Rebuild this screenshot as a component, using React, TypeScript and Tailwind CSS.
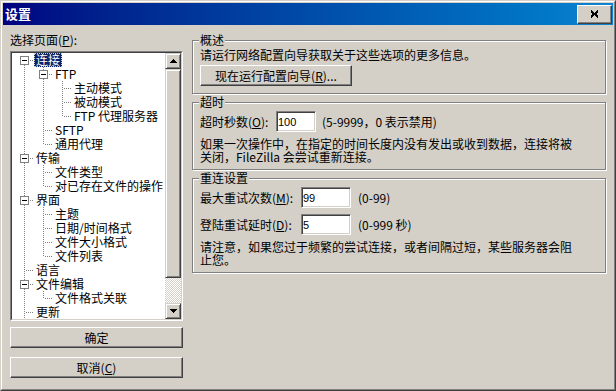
import React from 'react';

type TreeItem = {
  label: string;
  level: number;
  hasNext: boolean;
  expander?: boolean;
  selected?: boolean;
};

const treeItems: TreeItem[] = [
  { label: '连接', level: 0, hasNext: true, expander: true, selected: true },
  { label: 'FTP', level: 1, hasNext: true, expander: true },
  { label: '主动模式', level: 2, hasNext: true },
  { label: '被动模式', level: 2, hasNext: true },
  { label: 'FTP 代理服务器', level: 2, hasNext: false },
  { label: 'SFTP', level: 1, hasNext: true },
  { label: '通用代理', level: 1, hasNext: false },
  { label: '传输', level: 0, hasNext: true, expander: true },
  { label: '文件类型', level: 1, hasNext: true },
  { label: '对已存在文件的操作', level: 1, hasNext: false },
  { label: '界面', level: 0, hasNext: true, expander: true },
  { label: '主题', level: 1, hasNext: true },
  { label: '日期/时间格式', level: 1, hasNext: true },
  { label: '文件大小格式', level: 1, hasNext: true },
  { label: '文件列表', level: 1, hasNext: false },
  { label: '语言', level: 0, hasNext: true },
  { label: '文件编辑', level: 0, hasNext: true, expander: true },
  { label: '文件格式关联', level: 1, hasNext: false },
  { label: '更新', level: 0, hasNext: true },
];

// one 19x14 slot of the tree's dotted guide lines
const GuideCell: React.FC<{ up?: boolean; down?: boolean; across?: boolean; box?: boolean }> = ({ up, down, across, box }) => (
  <svg width="19" height="14" className="shrink-0" shapeRendering="crispEdges">
    {up && <line x1="9.5" y1="0" x2="9.5" y2="7" stroke="#808080" strokeDasharray="1 1" />}
    {down && <line x1="9.5" y1="8" x2="9.5" y2="14" stroke="#808080" strokeDasharray="1 1" />}
    {across && <line x1="11" y1="7.5" x2="19" y2="7.5" stroke="#808080" strokeDasharray="1 1" />}
    {box && (
      <>
        <rect x="5.5" y="3.5" width="8" height="8" fill="#fff" stroke="#808080" />
        <line x1="7" y1="7.5" x2="12" y2="7.5" stroke="#000" />
      </>
    )}
  </svg>
);

const TreeRows: React.FC = () => {
  const open: boolean[] = [];
  return (
    <>
      {treeItems.map((item, i) => {
        const cells = [];
        for (let k = 0; k < item.level; k++) {
          const full = !!open[k];
          cells.push(<GuideCell key={k} up={full} down={full} />);
        }
        cells.push(
          <GuideCell key={item.level} up={i !== 0} down={item.hasNext} across box={item.expander} />
        );
        open[item.level] = item.hasNext;
        return (
          <div key={i} className="flex h-[14px] items-start pl-[3px]">
            {cells}
            <span
              className={
                item.selected
                  ? 'h-[14px] px-[2px] leading-[14px] whitespace-nowrap bg-[#0a246a] text-white outline outline-1 outline-dotted outline-[#d4d0c8] -outline-offset-1'
                  : 'h-[14px] px-[2px] leading-[14px] whitespace-nowrap'
              }
            >
              {item.label}
            </span>
          </div>
        );
      })}
    </>
  );
};

const ScrollArrow: React.FC<{ down?: boolean }> = ({ down }) => (
  <div className="h-[16px] shrink-0 flex items-center justify-center bg-[#d4d0c8] border border-t-[#d4d0c8] border-l-[#d4d0c8] border-r-[#404040] border-b-[#404040] shadow-[inset_1px_1px_0_#fff,inset_-1px_-1px_0_#808080]">
    <svg width="7" height="4" shapeRendering="crispEdges">
      {down ? <polygon points="0,0 7,0 3.5,4" fill="#000" /> : <polygon points="3.5,0 7,4 0,4" fill="#000" />}
    </svg>
  </div>
);

export default function App() {
  return (
    <div className="w-[616px] h-[391px] bg-[#d4d0c8] border border-t-[#d4d0c8] border-l-[#d4d0c8] border-r-[#404040] border-b-[#404040] font-['Noto_Sans_CJK_SC',sans-serif] text-[12px] text-black">
      <div className="h-full flex flex-col p-px border border-t-white border-l-white border-r-[#808080] border-b-[#808080]">
        {/* title bar */}
        <div className="h-[22px] shrink-0 flex items-center justify-between pl-[2px] pr-px bg-linear-to-r from-[#000080] to-[#1084d0]">
          <span className="text-white font-bold text-[13px] leading-[14px]">设置</span>
          <button className="w-[35px] h-[19px] flex items-center justify-center bg-[#d4d0c8] border border-t-white border-l-white border-r-[#404040] border-b-[#404040] shadow-[inset_-1px_-1px_0_#808080]">
            <svg width="9" height="8" viewBox="0 0 9 8" shapeRendering="crispEdges">
              <path d="M1 1 L8 7 M8 1 L1 7" stroke="#000" strokeWidth="2" />
            </svg>
          </button>
        </div>

        <div className="flex pl-[7px] pt-[8px]">
          {/* page tree */}
          <div className="w-[173px] flex flex-col">
            <div className="h-[14px] leading-[14px]">
              选择页面(<u>P</u>):
            </div>
            <div className="mt-[4px] h-[270px] border border-t-[#808080] border-l-[#808080] border-r-white border-b-white">
              <div className="h-full flex border border-t-[#404040] border-l-[#404040] border-r-[#d4d0c8] border-b-[#d4d0c8] bg-white">
                <div className="flex-1 min-w-0 overflow-x-clip">
                  <TreeRows />
                </div>
                <div className="w-[16px] flex flex-col">
                  <ScrollArrow />
                  <div className="h-[209px] shrink-0 bg-[#d4d0c8] border border-t-[#d4d0c8] border-l-[#d4d0c8] border-r-[#404040] border-b-[#404040] shadow-[inset_1px_1px_0_#fff,inset_-1px_-1px_0_#808080]" />
                  <div className="flex-1 bg-[image:repeating-conic-gradient(#ffffff_0%_25%,#d4d0c8_0%_50%)] bg-[length:2px_2px]" />
                  <ScrollArrow down />
                </div>
              </div>
            </div>
            <button className="mt-[6px] h-[21px] bg-[#d4d0c8] leading-[14px] border border-t-white border-l-white border-r-[#404040] border-b-[#404040] shadow-[inset_-1px_-1px_0_#808080]">
              确定
            </button>
            <button className="mt-[9px] h-[21px] bg-[#d4d0c8] leading-[14px] border border-t-white border-l-white border-r-[#404040] border-b-[#404040] shadow-[inset_-1px_-1px_0_#808080]">
              取消(<u>C</u>)
            </button>
          </div>

          {/* settings page */}
          <div className="ml-[9px] w-[414px] flex flex-col">
            <fieldset className="px-[7px] pb-[7px] border border-[#808080] shadow-[1px_1px_0_#fff,inset_1px_1px_0_#fff]">
              <legend className="ml-[-1px] px-[1px] h-[14px] leading-[14px] bg-[#d4d0c8]">概述</legend>
              <div className="mt-px leading-[14px]">请运行网络配置向导获取关于这些选项的更多信息。</div>
              <button className="mt-[3px] w-[152px] h-[21px] bg-[#d4d0c8] leading-[14px] border border-t-white border-l-white border-r-[#404040] border-b-[#404040] shadow-[inset_-1px_-1px_0_#808080]">
                现在运行配置向导(<u>R</u>)...
              </button>
            </fieldset>

            <fieldset className="mt-px px-[7px] pb-[6px] border border-[#808080] shadow-[1px_1px_0_#fff,inset_1px_1px_0_#fff]">
              <legend className="ml-[-1px] px-[1px] h-[14px] leading-[14px] bg-[#d4d0c8]">超时</legend>
              <div className="mt-[2px] h-[21px] flex items-center">
                <span className="w-[76px] leading-[14px]">超时秒数(<u>O</u>):</span>
                <input
                  type="text"
                  readOnly
                  defaultValue="100"
                  className="w-[40px] h-[21px] pl-px bg-white font-['Liberation_Sans',sans-serif] text-[11px] border border-t-[#808080] border-l-[#808080] border-r-white border-b-white shadow-[inset_1px_1px_0_#404040,inset_-1px_-1px_0_#d4d0c8] outline-none"
                />
                <span className="ml-[6px] leading-[14px]">(5-9999，0 表示禁用)</span>
              </div>
              <p className="mt-[5px] leading-[13px]">
                如果一次操作中，在指定的时间长度内没有发出或收到数据，连接将被
                <br />
                关闭，FileZilla 会尝试重新连接。
              </p>
            </fieldset>

            <fieldset className="mt-px px-[7px] pb-[6px] border border-[#808080] shadow-[1px_1px_0_#fff,inset_1px_1px_0_#fff]">
              <legend className="ml-[-1px] px-[1px] h-[14px] leading-[14px] bg-[#d4d0c8]">重连设置</legend>
              <div className="mt-[2px] h-[21px] flex items-center">
                <span className="w-[101px] leading-[14px]">最大重试次数(<u>M</u>):</span>
                <input
                  type="text"
                  readOnly
                  defaultValue="99"
                  className="w-[50px] h-[21px] pl-px bg-white font-['Liberation_Sans',sans-serif] text-[11px] border border-t-[#808080] border-l-[#808080] border-r-white border-b-white shadow-[inset_1px_1px_0_#404040,inset_-1px_-1px_0_#d4d0c8] outline-none"
                />
                <span className="ml-[7px] leading-[14px]">(0-99)</span>
              </div>
              <div className="mt-[6px] h-[21px] flex items-center">
                <span className="w-[101px] leading-[14px]">登陆重试延时(<u>D</u>):</span>
                <input
                  type="text"
                  readOnly
                  defaultValue="5"
                  className="w-[50px] h-[21px] pl-px bg-white font-['Liberation_Sans',sans-serif] text-[11px] border border-t-[#808080] border-l-[#808080] border-r-white border-b-white shadow-[inset_1px_1px_0_#404040,inset_-1px_-1px_0_#d4d0c8] outline-none"
                />
                <span className="ml-[7px] leading-[14px]">(0-999 秒)</span>
              </div>
              <p className="mt-[5px] leading-[13px]">
                请注意，如果您过于频繁的尝试连接，或者间隔过短，某些服务器会阻
                <br />
                止您。
              </p>
            </fieldset>
          </div>
        </div>
      </div>
    </div>
  );
}
